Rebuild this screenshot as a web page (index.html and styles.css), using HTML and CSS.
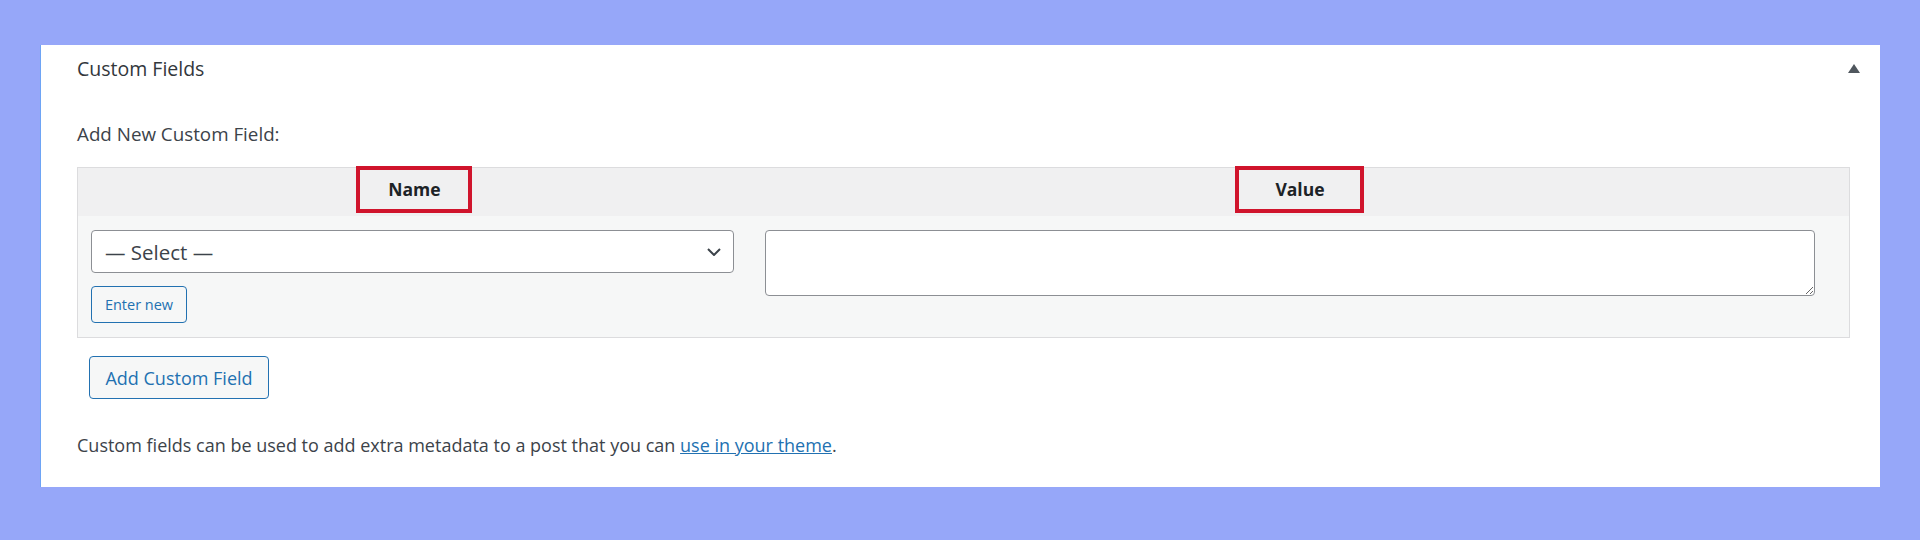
FILE: index.html
```html
<!DOCTYPE html>
<html>

<head>
    <meta charset="UTF-8">
    <title>Custom Fields</title>
    <link rel="stylesheet" href="styles.css">
</head>

<body>
    <div class='postbox'>
        <div class='postbox-header'>
            <h2 class='hndle'>Custom Fields</h2>
            <svg class='toggle' width='12' height='9' viewBox='0 0 12 9'>
                <polygon points='6,0 12,9 0,9' fill='#50575e' />
            </svg>
        </div>
        <p class='new-label'>Add New Custom Field:</p>
        <div class='meta-table'>
            <div class='meta-head'>
                <div class='col-left'><span class='mark mark-name'>Name</span></div>
                <div class='col-right'><span class='mark mark-value'>Value</span></div>
            </div>
            <div class='meta-row'>
                <div class='cell-left'>
                    <div class='select-wrap'>
                        <select class='meta-select'>
                            <option>&mdash; Select &mdash;</option>
                        </select>
                        <svg class='chevron' width='14' height='8' viewBox='0 0 14 8'>
                            <path d='M1 1l6 6 6-6' fill='none' stroke='#3c434a' stroke-width='2' />
                        </svg>
                    </div>
                    <button class='btn btn-small'>Enter new</button>
                </div>
                <div class='cell-right'>
                    <textarea class='meta-value'></textarea>
                </div>
            </div>
        </div>
        <button class='btn btn-add'>Add Custom Field</button>
        <p class='note'>Custom fields can be used to add extra metadata to a post that you can <a href='#'>use in your theme</a>.</p>
    </div>
</body>

</html>
```

FILE: styles.css
```css
html,
body {
    margin: 0;
    padding: 0;
}

body {
    background: #96a7f9;
    padding: 45px 40px 53px 40px;
    font-family: "Open Sans", "Noto Sans", sans-serif;
    color: #3c434a;
}

.postbox {
    background: #fff;
    border-left: 1px solid #6ea4f5;
    height: 442px;
    padding: 10px 30px 0 36px;
    box-sizing: border-box;
}

.postbox-header {
    display: flex;
    justify-content: space-between;
    align-items: center;
    height: 28px;
}

.hndle {
    margin: 0;
    font-size: 19.5px;
    font-weight: 400;
    line-height: 28px;
    color: #32373c;
}

.toggle {
    margin-right: -10px;
    margin-top: -2px;
}

.new-label {
    margin: 38px 0 0 0;
    font-size: 18.8px;
    line-height: 26px;
}

.meta-table {
    margin-top: 20px;
    border: 1px solid #dcdcde;
    background: #f6f7f7;
}

.meta-head {
    display: grid;
    grid-template-columns: 38% 62%;
    height: 48px;
    background: #f0f0f1;
}

.col-left,
.col-right {
    display: flex;
    justify-content: center;
    align-items: flex-start;
}

.mark {
    display: inline-block;
    box-sizing: border-box;
    height: 47px;
    margin-top: -2px;
    border: 4px solid #d0142c;
    text-align: center;
    font-size: 17.5px;
    font-weight: 700;
    line-height: 39px;
    color: #1d2327;
}

.mark-name {
    width: 116px;
}

.mark-value {
    width: 129px;
}

.meta-row {
    display: grid;
    grid-template-columns: 38% 62%;
}

.cell-left {
    padding: 14px 17px 14px 13px;
}

.cell-right {
    padding: 14px 34px 14px 14px;
}

.select-wrap {
    position: relative;
}

.meta-select {
    appearance: none;
    -webkit-appearance: none;
    display: block;
    width: 100%;
    height: 43px;
    margin: 0;
    padding: 0 40px 0 13px;
    border: 1px solid #8c8f94;
    border-radius: 4px;
    background: #fff;
    font-family: inherit;
    font-size: 20.5px;
    color: #3c434a;
}

.chevron {
    position: absolute;
    right: 13px;
    top: 18px;
}

.btn {
    display: block;
    box-sizing: border-box;
    border: 1px solid #2271b1;
    border-radius: 4px;
    background: #f6f7f7;
    color: #2271b1;
    font-family: inherit;
    padding: 0;
    cursor: pointer;
}

.btn-small {
    margin-top: 13px;
    width: 96px;
    height: 37px;
    font-size: 14.5px;
}

.meta-value {
    display: block;
    box-sizing: border-box;
    width: 100%;
    height: 66px;
    margin: 0;
    border: 1px solid #8c8f94;
    border-radius: 4px;
    background: #fff;
    font-family: inherit;
}

.btn-add {
    margin: 18px 0 0 12px;
    width: 180px;
    height: 43px;
    font-size: 18px;
}

.note {
    margin: 33px 0 0 0;
    font-size: 18px;
    line-height: 26px;
}

.note a {
    color: #2271b1;
}
```
